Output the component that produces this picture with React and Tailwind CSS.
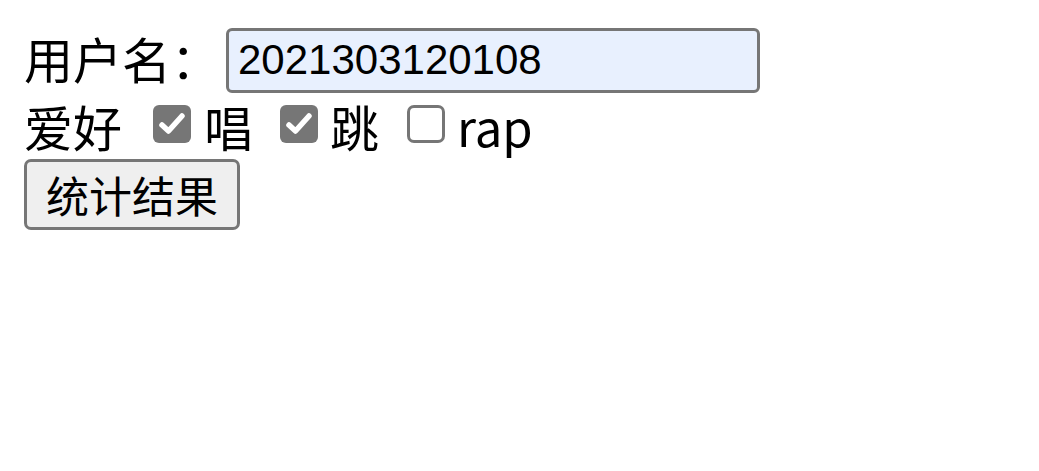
export default function App() {
  const cjk = { fontFamily: '"Noto Sans CJK SC", "Noto Sans", sans-serif' };
  const Check = ({ checked }) =>
    checked ? (
      <span className="flex h-[38px] w-[38px] items-center justify-center rounded-[6px] bg-[#767676]">
        <svg width="38" height="38" viewBox="0 0 38 38">
          <path d="M9 20 L15.5 26 L29 11" fill="none" stroke="#ffffff" strokeWidth="5.5" strokeLinecap="round" strokeLinejoin="round" />
        </svg>
      </span>
    ) : (
      <span className="block h-[38px] w-[38px] rounded-[7px] border-[3px] border-[#767676] bg-white" />
    );
  return (
    <div className="min-h-[471px] bg-white pl-[24px] pt-[24px] text-black" style={cjk}>
      <div className="flex h-[72px] items-center">
        <span className="text-[49px] leading-[48px] mb-[4px]">用户名：</span>
        <div className="ml-[6px] flex h-[65px] w-[534px] items-center rounded-[6px] border-[3px] border-[#767676] bg-[#e8f0fe] pl-[9px]">
          <span className="text-[42px] leading-none" style={{ fontFamily: '"Liberation Sans", Arial, sans-serif' }}>2021303120108</span>
        </div>
      </div>
      <div className="flex h-[64px] items-center text-[49px] leading-[48px] -mt-[2px]">
        <span>爱好</span>
        <span className="ml-[31px] -mt-[4px]"><Check checked /></span>
        <span className="ml-[13px]">唱</span>
        <span className="ml-[27px] -mt-[4px]"><Check checked /></span>
        <span className="ml-[12px]">跳</span>
        <span className="ml-[28px] -mt-[4px]"><Check checked={false} /></span>
        <span className="ml-[12px]">rap</span>
      </div>
      <div className="flex mt-[1px]">
        <button className="flex h-[71px] w-[216px] items-center justify-center rounded-[7px] border-[3px] border-[#767676] bg-[#efefef] text-[43px] leading-none">
          统计结果
        </button>
      </div>
    </div>
  );
}
